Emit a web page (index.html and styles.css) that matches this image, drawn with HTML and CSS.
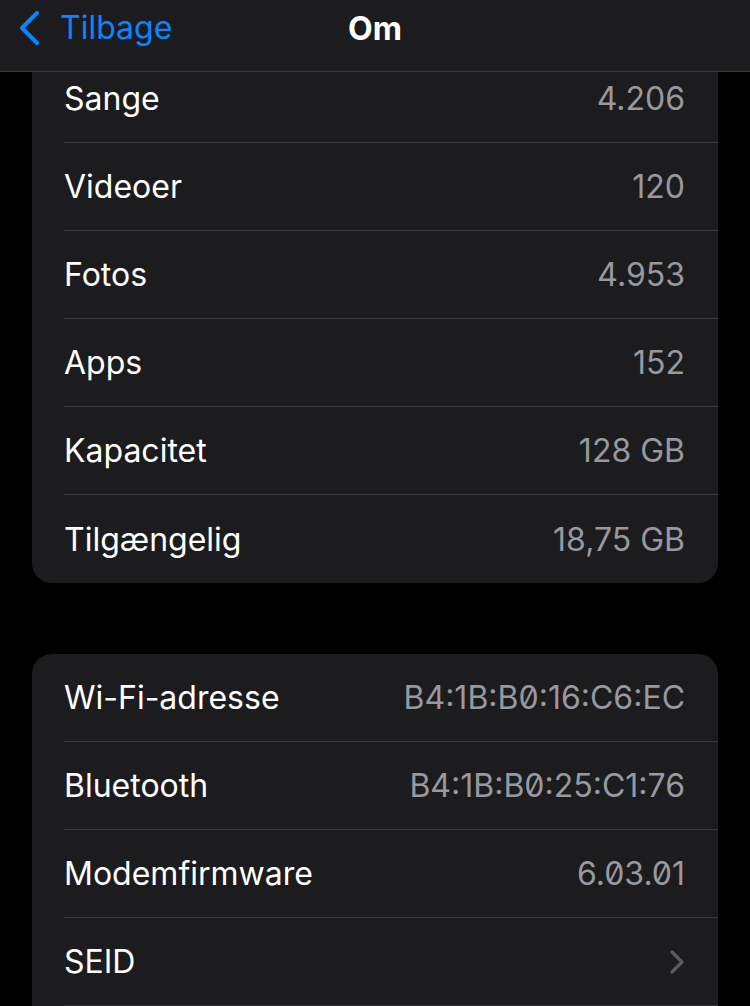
FILE: index.html
```html
<!DOCTYPE html>
<html lang="da">
<head>
    <meta charset="UTF-8">
    <meta name="viewport" content="width=device-width, initial-scale=1.0">
    <title>Om</title>
    <link rel="stylesheet" href="styles.css">
</head>
<body>
    <div class="nav-bar">
        <div class="back-btn">
            <svg class="back-icon" width="26" height="36" viewBox="0 0 26 36">
                <path d="M21 3 L6 18 L21 33" fill="none" stroke="#0a84ff" stroke-width="4.2" stroke-linecap="round" stroke-linejoin="round"/>
            </svg>
            <span>Tilbage</span>
        </div>
        <div class="nav-title">Om</div>
    </div>

    <div class="content">
        <div class="group first-group">
            <div class="row"><span class="label">Sange</span><span class="value">4.206</span></div>
            <div class="row"><span class="label">Videoer</span><span class="value">120</span></div>
            <div class="row"><span class="label">Fotos</span><span class="value">4.953</span></div>
            <div class="row"><span class="label">Apps</span><span class="value">152</span></div>
            <div class="row"><span class="label">Kapacitet</span><span class="value">128 GB</span></div>
            <div class="row"><span class="label">Tilgængelig</span><span class="value">18,75 GB</span></div>
        </div>

        <div class="group">
            <div class="row"><span class="label">Wi-Fi-adresse</span><span class="value mono">B4:1B:B0:16:C6:EC</span></div>
            <div class="row"><span class="label">Bluetooth</span><span class="value mono">B4:1B:B0:25:C1:76</span></div>
            <div class="row"><span class="label">Modemfirmware</span><span class="value mono">6.03.01</span></div>
            <div class="row">
                <span class="label">SEID</span>
                <svg class="chevron" width="16" height="26" viewBox="0 0 16 26">
                    <path d="M3 3 L13 13 L3 23" fill="none" stroke="#5b5b60" stroke-width="3.2" stroke-linecap="round" stroke-linejoin="round"/>
                </svg>
            </div>
            <div class="row"><span class="label">&nbsp;</span></div>
        </div>
    </div>
</body>
</html>
```

FILE: styles.css
```css
body {
    margin: 0;
    padding: 0;
    background-color: #000;
    color: #fff;
    font-family: 'Inter', 'Noto Sans', sans-serif;
    height: 1006px;
    overflow: hidden;
}

.nav-bar {
    height: 72px;
    box-sizing: border-box;
    background-color: #1c1c1e;
    border-bottom: 1px solid #3a3a3c;
    display: flex;
    align-items: center;
    position: relative;
}

.back-btn {
    display: flex;
    align-items: center;
    color: #0a84ff;
    font-size: 32px;
    padding-left: 16px;
    gap: 18px;
    margin-top: -16px;
}

.nav-title {
    position: absolute;
    left: 0;
    right: 0;
    top: 9px;
    text-align: center;
    font-size: 32px;
    font-weight: 700;
    pointer-events: none;
}

.content {
    height: 934px;
    overflow: hidden;
    padding: 0 32px;
}

.group {
    background-color: #1c1c1e;
    border-radius: 20px;
    margin-bottom: 71px;
}

.first-group {
    margin-top: -17px;
    border-top-left-radius: 0;
    border-top-right-radius: 0;
}

.row {
    height: 88px;
    margin-left: 32px;
    padding-right: 33px;
    display: flex;
    align-items: center;
    justify-content: space-between;
    border-bottom: 1px solid #38383a;
    box-sizing: border-box;
    font-size: 32px;
}

.group .row:last-child {
    border-bottom: none;
}

.label {
    color: #fff;
}

.value {
    color: #98989f;
}

.mono {
    font-feature-settings: "zero" 1;
}
```
